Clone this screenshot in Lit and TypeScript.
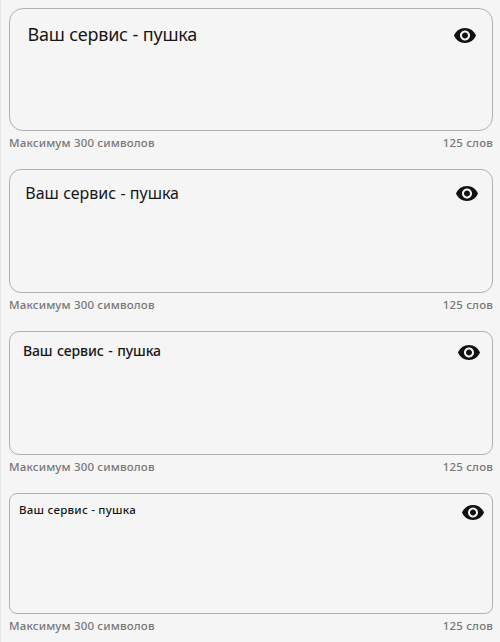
import { LitElement, html, css } from "lit";
import { customElement } from "lit/decorators.js";
import { styleMap } from "lit/directives/style-map.js";

interface Area { gap: number; height: number; radius: number; textX: number; textY: number; size: number; weight: number; spacing: number; wordGap: number; eyeX: number; eyeY: number; }

const areas: Area[] = [
  { gap: 8, height: 123, radius: 14, textX: 17.5, textY: 13, size: 18, weight: 400, spacing: -0.23, wordGap: 0.3, eyeX: 15, eyeY: 14 },
  { gap: 18, height: 124, radius: 12, textX: 15.3, textY: 11, size: 16, weight: 400, spacing: -0.03, wordGap: 0.2, eyeX: 13, eyeY: 11 },
  { gap: 18, height: 124, radius: 10, textX: 13, textY: 7, size: 14, weight: 500, spacing: -0.13, wordGap: 1.1, eyeX: 11, eyeY: 8 },
  { gap: 18, height: 121, radius: 8, textX: 9, textY: 4, size: 11.5, weight: 500, spacing: 0.25, wordGap: 0, eyeX: 7, eyeY: 6 },
];

@customElement("app-root")
export class AppRoot extends LitElement {
  static styles = css`
    :host { display: block; box-sizing: border-box; height: 642px; overflow: hidden; background: #f5f5f5; border-left: 1px solid #e6e6e6; padding: 0 7px 0 8px; font-family: "Noto Sans", sans-serif; color: #171717; }
    .box { box-sizing: border-box; border: 1px solid #b0b0b0; display: flex; justify-content: space-between; align-items: flex-start; }
    .value { line-height: 24px; white-space: nowrap; }
    .meta { display: flex; justify-content: space-between; height: 20px; line-height: 24px; font-size: 11.5px; letter-spacing: 0.16px; font-weight: 500; color: #777; }
    .eye { display: block; width: 24px; height: 24px; }
  `;

  render() {
    return areas.map((a) => html`
      <div class="box" style=${styleMap({ marginTop: `${a.gap}px`, height: `${a.height}px`, borderRadius: `${a.radius}px`, padding: `0 ${a.eyeX}px 0 ${a.textX}px` })}>
        <span class="value" style=${styleMap({ marginTop: `${a.textY}px`, fontSize: `${a.size}px`, fontWeight: String(a.weight), letterSpacing: `${a.spacing}px`, wordSpacing: `${a.wordGap}px` })}>Ваш сервис - пушка</span>
        <svg class="eye" style=${styleMap({ marginTop: `${a.eyeY}px` })} viewBox="0 -0.5 24 24" fill="#111"><path d="M12 4.5C7 4.5 2.73 7.61 1 12c1.73 4.39 6 7.5 11 7.5s9.27-3.11 11-7.5c-1.73-4.39-6-7.5-11-7.5zM12 17c-2.76 0-5-2.24-5-5s2.24-5 5-5 5 2.24 5 5-2.24 5-5 5zm0-8c-1.66 0-3 1.34-3 3s1.34 3 3 3 3-1.34 3-3-1.34-3-3-3z"/></svg>
      </div>
      <div class="meta"><span>Максимум 300 символов</span><span>125 слов</span></div>`);
  }
}
